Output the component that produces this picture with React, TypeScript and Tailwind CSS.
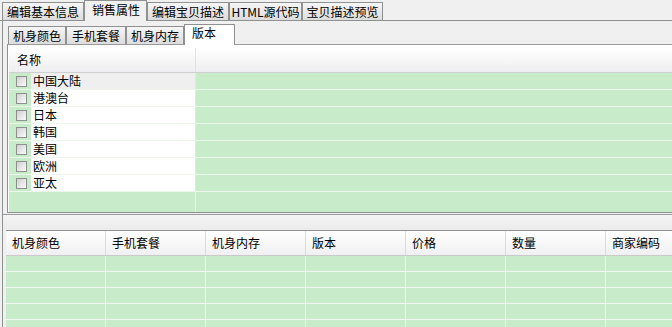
import React from "react";

const topTabs = [
  { label: "编辑基本信息", w: "w-[82px]" },
  { label: "销售属性", w: "w-[63px]", active: true },
  { label: "编辑宝贝描述", w: "w-[82px]" },
  { label: "HTML源代码", w: "w-[73px]" },
  { label: "宝贝描述预览", w: "w-[81px]" },
];

const subTabs = [
  { label: "机身颜色", w: "w-[58px]" },
  { label: "手机套餐", w: "w-[60px]" },
  { label: "机身内存", w: "w-[58px]" },
  { label: "版本", w: "w-[51px]", active: true },
];

const versions = ["中国大陆", "港澳台", "日本", "韩国", "美国", "欧洲", "亚太"];

const columns = ["机身颜色", "手机套餐", "机身内存", "版本", "价格", "数量", "商家编码"];

const Checkbox = () => (
  <span className="block w-[11px] h-[11px] border border-[#8e8f8f] bg-linear-to-br from-[#d0d0d0] to-[#fbfbfb]" />
);

const App = () => {
  return (
    <div className="w-[672px] h-[327px] overflow-hidden bg-[#f0f0f0] text-[12px] text-black font-['Noto_Sans_CJK_SC','Noto_Sans',sans-serif]">
      {/* top tabs */}
      <div className="h-[21px] flex items-end pl-[2px] border-b border-[#8f9090]">
        {topTabs.map((t) =>
          t.active ? (
            <div
              key={t.label}
              className={`${t.w} h-[21px] -mb-px shrink-0 bg-[#f0f0f0] border border-b-0 border-[#8f9090] pl-[7px] pt-px leading-[16px] whitespace-nowrap`}
            >
              {t.label}
            </div>
          ) : (
            <div
              key={t.label}
              className={`${t.w} h-[18px] shrink-0 border border-b-0 border-[#8f9090] bg-linear-to-b from-[#f6f6f6] to-[#dcdcdc] text-center leading-[17px] whitespace-nowrap`}
            >
              {t.label}
            </div>
          )
        )}
      </div>

      {/* outer panel */}
      <div className="ml-[2px] h-[306px] border-l border-[#8f9090]">
        <div className="pl-[4px] pt-[3px]">
          {/* sub tabs */}
          <div className="h-[21px] flex items-end pl-px border-b border-[#9a9a9a]">
            {subTabs.map((t) =>
              t.active ? (
                <div
                  key={t.label}
                  className={`${t.w} h-[21px] -mb-px shrink-0 bg-white border border-b-0 border-[#8f9090] pl-[7px] leading-[16px] whitespace-nowrap`}
                >
                  {t.label}
                </div>
              ) : (
                <div
                  key={t.label}
                  className={`${t.w} h-[18px] shrink-0 border border-b-0 border-[#8f9090] bg-linear-to-b from-[#f6f6f6] to-[#dcdcdc] text-center leading-[17px] whitespace-nowrap`}
                >
                  {t.label}
                </div>
              )
            )}
          </div>

          {/* upper panel */}
          <div className="h-[168px] border-l border-b border-[#8f9090] pt-[3px] pl-px bg-white">
            <div className="h-[164px] flex flex-col bg-[#c8ecc9] overflow-hidden">
              <div className="h-[25px] shrink-0 flex border-b border-[#d0d0d0] bg-linear-to-b from-white to-[#eeeef0]">
                <div className="w-[187px] shrink-0 border-r border-[#e2e2e2] pl-[8px] leading-[24px]">名称</div>
                <div className="flex-1" />
              </div>
              {versions.map((v, i) => (
                <div key={v} className="h-[17px] shrink-0 flex border-b border-[#ebf7eb]">
                  <div className="w-[22px] shrink-0 flex items-center pl-[7px]">
                    <Checkbox />
                  </div>
                  <div
                    className={`w-[165px] shrink-0 pl-[2px] leading-[16px] border-r border-[#e6e6e6] ${
                      i === 0 ? "bg-[#efefef]" : "bg-white"
                    }`}
                  >
                    {v}
                  </div>
                  <div className="flex-1" />
                </div>
              ))}
              <div className="flex flex-1">
                <div className="w-[187px] shrink-0 border-r border-[#e4f4e4]" />
              </div>
            </div>
          </div>
        </div>

        {/* splitter */}
        <div className="mt-px h-[16px] border-t border-[#9a9a9a] bg-linear-to-b from-[#f4f4f4] to-[#ececec]" />

        {/* lower grid */}
        <div className="ml-[3px] border-t border-[#8f9090] bg-[#c8ecc9]">
          <div className="h-[25px] flex border-b border-[#c9c9c9] bg-linear-to-b from-white to-[#f0f0f2]">
            {columns.map((c) => (
              <div
                key={c}
                className="w-[100px] shrink-0 border-r border-[#dcdcdc] pl-[6px] leading-[24px] whitespace-nowrap"
              >
                {c}
              </div>
            ))}
          </div>
          {[0, 1, 2, 3, 4].map((r) => (
            <div key={r} className="h-[16px] flex border-b border-[#eef8ee]">
              {columns.map((c) => (
                <div key={c} className="w-[100px] shrink-0 border-r border-[#eef8ee]" />
              ))}
            </div>
          ))}
        </div>
      </div>
    </div>
  );
};

export default App;
